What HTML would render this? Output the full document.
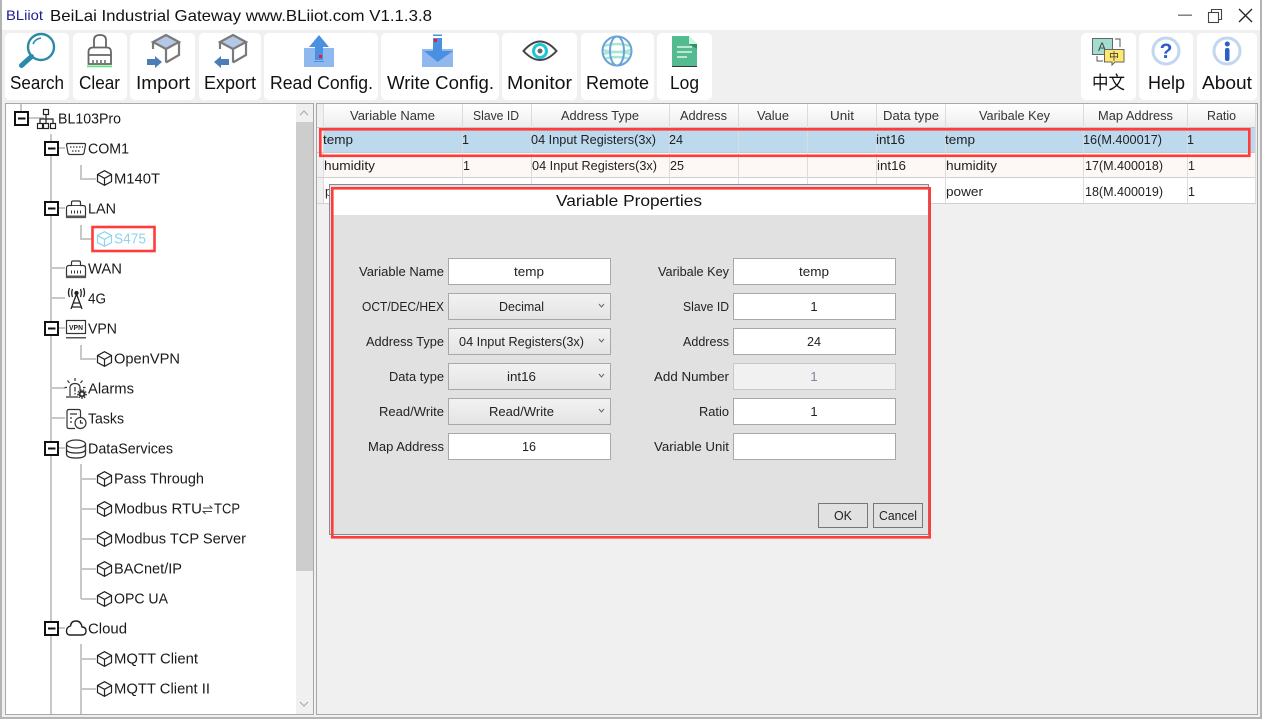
<!DOCTYPE html>
<html><head><meta charset="utf-8"><title>BeiLai Industrial Gateway</title>
<style>
html,body{margin:0;padding:0;background:#f0f0f0;overflow:hidden}
svg{display:block}
text{font-family:"Liberation Sans","Noto Sans CJK SC",sans-serif;fill:#111}
.tb{font-size:18px}
.tr{font-size:14.5px;fill:#1a1a1a}
.th{font-size:12.5px;fill:#333;text-anchor:middle}
.td{font-size:12.5px;fill:#222}
.lb{font-size:13px;fill:#222;text-anchor:end}
.vl{font-size:13px;fill:#222;text-anchor:middle}
</style></head><body>
<svg width="1264" height="719" viewBox="0 0 1264 719" xmlns="http://www.w3.org/2000/svg">
<defs>
<linearGradient id="hd" x1="0" y1="0" x2="0" y2="1"><stop offset="0" stop-color="#ffffff"/><stop offset="1" stop-color="#eeeeee"/></linearGradient>
<linearGradient id="sel" x1="0" y1="0" x2="0" y2="1"><stop offset="0" stop-color="#f2f2f2"/><stop offset="1" stop-color="#e4e4e4"/></linearGradient>
<g id="cube" fill="none" stroke="#222" stroke-width="1.2"><path d="M7.5 .7L14.5 4.5V11.5L7.5 15.3L.5 11.500V4.500Z"/><path d="M.5 4.5L7.5 8.3L14.5 4.5M7.5 8.3V15.3"/></g>
<g id="cubeb" fill="none" stroke="#8fd3f0" stroke-width="1.2"><path d="M7.5 .7L14.5 4.5V11.5L7.5 15.3L.5 11.5V4.5Z"/><path d="M.5 4.5L7.5 8.3L14.5 4.5M7.5 8.3V15.3"/></g>
<g id="exp"><rect x="1" y="1" width="13" height="13" fill="#fff" stroke="#111" stroke-width="2"/><rect x="4" y="6.500" width="7.500" height="2" fill="#111"/></g>
<g id="lan" fill="none" stroke="#333" stroke-width="1.200"><path d="M.5 17.500V8Q.5 5.500 3 5.500H5.500V2.500Q5.500 1 7 1H13Q14.500 1 14.500 2.500V5.500H17Q19.500 5.500 19.500 8V17.500Z"/><rect x="0" y="15.500" width="20" height="2.500" fill="#555" stroke="none"/><path d="M5.500 13.500V10.500M8.500 13.500V10.500M11.500 13.500V10.500M14.500 13.500V10.500" stroke-width="1"/><path d="M5.500 5.500H14.500" stroke-width=".9"/></g>
<g id="box"><path d="M10 1L23 8L10 15L-3 8Z" fill="#b3c7e6" stroke="#7a7a7a" stroke-width="2.200"/><path d="M-3 8V15M23 8V21L10 28.500M10 15V28.500" fill="none" stroke="#7a7a7a" stroke-width="2.200"/></g>
</defs>

<!-- window -->
<rect width="1264" height="719" fill="#f0f0f0"/>
<rect x="0" y="0" width="1264" height="30" fill="#fff"/>
<rect x="0" y="0" width="2" height="719" fill="#b4b4b4"/>
<rect x="1260" y="0" width="2" height="719" fill="#b4b4b4"/>
<rect x="0" y="717" width="1264" height="2" fill="#b4b4b4"/>
<rect x="1262" y="0" width="2" height="719" fill="#fff"/>
<text x="6" y="20" font-size="13.5" textLength="37" lengthAdjust="spacingAndGlyphs" style="fill:#1c1c8e">BLiiot</text>
<text x="50" y="21" font-size="16" textLength="382" lengthAdjust="spacingAndGlyphs" style="fill:#111">BeiLai Industrial Gateway www.BLiiot.com V1.1.3.8</text>
<rect x="1178" y="14.500" width="14" height="1.400" fill="#777"/>
<g fill="none" stroke="#444" stroke-width="1.100"><rect x="1208.500" y="12.500" width="10" height="10" fill="#fff"/><path d="M1211.500 12.500V9.500H1221.500V19.500H1218.500"/></g>
<path d="M1239 9L1252 22M1252 9L1239 22" stroke="#222" stroke-width="1.300" fill="none"/>

<!-- toolbar buttons -->
<g fill="#fff">
<rect x="5" y="33" width="64" height="67" rx="5"/><rect x="73" y="33" width="54" height="67" rx="5"/>
<rect x="130" y="33" width="65" height="67" rx="5"/><rect x="199" y="33" width="62" height="67" rx="5"/>
<rect x="264" y="33" width="114" height="67" rx="5"/><rect x="381" y="33" width="118" height="67" rx="5"/>
<rect x="502" y="33" width="75" height="67" rx="5"/><rect x="581" y="33" width="73" height="67" rx="5"/>
<rect x="657" y="33" width="55" height="67" rx="5"/><rect x="1081" y="33" width="55" height="67" rx="5"/>
<rect x="1139" y="33" width="54" height="67" rx="5"/><rect x="1197" y="33" width="60" height="67" rx="5"/>
</g>
<text class="tb" x="10" y="89" textLength="54" lengthAdjust="spacingAndGlyphs">Search</text>
<text class="tb" x="79" y="89" textLength="41" lengthAdjust="spacingAndGlyphs">Clear</text>
<text class="tb" x="136" y="89" textLength="54" lengthAdjust="spacingAndGlyphs">Import</text>
<text class="tb" x="204" y="89" textLength="52" lengthAdjust="spacingAndGlyphs">Export</text>
<text class="tb" x="270" y="89" textLength="103" lengthAdjust="spacingAndGlyphs">Read Config.</text>
<text class="tb" x="387" y="89" textLength="107" lengthAdjust="spacingAndGlyphs">Write Config.</text>
<text class="tb" x="507" y="89" textLength="65" lengthAdjust="spacingAndGlyphs">Monitor</text>
<text class="tb" x="586" y="89" textLength="63" lengthAdjust="spacingAndGlyphs">Remote</text>
<text class="tb" x="670" y="89" textLength="29" lengthAdjust="spacingAndGlyphs">Log</text>
<text class="tb" x="1092" y="89" textLength="33" lengthAdjust="spacingAndGlyphs">中文</text>
<text class="tb" x="1148" y="89" textLength="37" lengthAdjust="spacingAndGlyphs">Help</text>
<text class="tb" x="1202" y="89" textLength="50" lengthAdjust="spacingAndGlyphs">About</text>

<!-- search -->
<circle cx="41" cy="47" r="13" fill="none" stroke="#2a8aa8" stroke-width="2.400"/>
<path d="M33 44Q35 39 41 38" fill="none" stroke="#2a8aa8" stroke-width="1.500"/>
<path d="M31.500 56.500L21.500 65.500" stroke="#2a8aa8" stroke-width="5" stroke-linecap="round"/>
<!-- clear -->
<g fill="none" stroke="#666" stroke-width="1.800"><path d="M94 47V40Q94 35 100 35Q106 35 106 40V47"/><path d="M88.500 64V52Q88.500 47.500 93 47.500H107Q111 47.500 111 52V64Z"/><path d="M88 55H111"/><path d="M93 63V60M97 63V60M101 63V60M105 63V60" stroke-width="1.500"/></g>
<rect x="87" y="65.500" width="25" height="1.800" fill="#5fe87f"/>
<!-- import -->
<use href="#box" x="156" y="34"/>
<path d="M147 59H155V56L162 62L155 68V65H147Z" fill="#4a7eb5"/>
<!-- export -->
<use href="#box" x="223" y="34"/>
<path d="M229 59H221V56L214 62L221 68V65H229Z" fill="#4a7eb5"/>
<!-- read -->
<rect x="304" y="48" width="30" height="19" fill="#8fb9ee"/>
<path d="M319 35L329 47H323V60H315V47H309Z" fill="#4a90e2"/>
<rect x="314" y="61" width="10" height="1" fill="#4a90e2"/>
<rect x="319" y="55" width="3" height="3" fill="#e82020"/>
<!-- write -->
<rect x="422" y="49" width="31" height="18" fill="#8fb9ee"/>
<path d="M433 38H442V51H453L437.500 62L424 51H433Z" fill="#4a90e2"/>
<rect x="433" y="34.500" width="9" height="1.500" fill="#4a90e2"/>
<rect x="434" y="39" width="3" height="3" fill="#e82020"/>
<!-- monitor -->
<path d="M523.500 51Q540 32 556.500 51Q540 69 523.500 51Z" fill="#fff" stroke="#444" stroke-width="2"/>
<circle cx="540" cy="51" r="6.500" fill="none" stroke="#1cc8d8" stroke-width="3"/>
<circle cx="540" cy="51" r="2.500" fill="#666"/>
<!-- remote -->
<g fill="none"><path d="M604 46Q617 42 630 46M603 50Q617 54 631 50M603 54Q617 50 631 54M604 59Q617 55 630 59" stroke="#a8e6d8" stroke-width="2.500"/>
<circle cx="617" cy="51" r="14.500" stroke="#6ba3d6" stroke-width="2"/><ellipse cx="617" cy="51" rx="7" ry="14.500" stroke="#6ba3d6" stroke-width="2"/></g>
<!-- log -->
<path d="M672 36H689L697 44V66H672Z" fill="#53bb8f"/>
<path d="M689 36L697 44H689Z" fill="#c9f5e4"/>
<path d="M689 44H697V49Z" fill="#2f8f67"/>
<rect x="672" y="66" width="25" height="1" fill="#333"/>
<path d="M677 47H692M677 52H692M677 57H687" stroke="#fff" stroke-width="1.300"/>
<!-- language -->
<rect x="1092.500" y="38.500" width="20" height="16" fill="#a2ddd0" stroke="#666" stroke-width="1"/>
<text x="1098" y="51" font-size="12" style="fill:#444">A</text>
<path d="M1115 39H1120V47M1097 56V61H1103" fill="none" stroke="#555" stroke-width="1"/>
<path d="M1104.500 49.500H1124V62H1115L1112 65V62H1104.500Z" fill="#ffe870" stroke="#666" stroke-width="1"/>
<text x="1109" y="60" font-size="10" style="fill:#333">中</text>
<!-- help -->
<circle cx="1166" cy="51" r="13" fill="#fff" stroke="#c2d6f0" stroke-width="3"/>
<text x="1166" y="58" font-size="21" font-weight="bold" text-anchor="middle" style="fill:#2860c8">?</text>
<!-- about -->
<circle cx="1227" cy="51" r="13" fill="#fff" stroke="#c2d6f0" stroke-width="3"/>
<rect x="1225" y="48" width="4.500" height="13" rx="2" fill="#2860c8"/><circle cx="1227.300" cy="44" r="2.500" fill="#2860c8"/>

<!-- tree panel -->
<rect x="5.500" y="103.500" width="308" height="611" fill="#fff" stroke="#a8a8a8"/>
<rect x="296" y="104" width="17" height="610" fill="#f0f0f0"/>
<rect x="296" y="122" width="17" height="449" fill="#cdcdcd"/>
<path d="M300 115L304 111L308 115M300 702L304 706L308 702" fill="none" stroke="#a6a6a6" stroke-width="1"/>

<g stroke="#c8c8c8" stroke-width="2" fill="none">
<path d="M21 104V111M28 118H36M44 118H36"/>
<path d="M51 134V714"/>
<path d="M58 148H65M81 165V179H96"/>
<path d="M58 208H65M81 225V239H92"/>
<path d="M51 268H65M51 298H65"/>
<path d="M58 328H65M81 345V359H96"/>
<path d="M51 388H65M51 418H65"/>
<path d="M58 448H65"/>
<path d="M81 464V599M81 479H96M81 509H96M81 539H96M81 569H96M81 599H96"/>
<path d="M58 628H65"/>
<path d="M81 644V714M81 659H96M81 689H96"/>
</g>
<use href="#exp" x="14" y="111"/><use href="#exp" x="44" y="141"/><use href="#exp" x="44" y="201"/><use href="#exp" x="44" y="321"/><use href="#exp" x="44" y="441"/><use href="#exp" x="44" y="621"/>

<!-- network icon -->
<g fill="none" stroke="#222" stroke-width="1.200"><rect x="43.500" y="109.500" width="5" height="5"/><rect x="37.500" y="123.500" width="5" height="5"/><rect x="43.500" y="123.500" width="5" height="5"/><rect x="50.500" y="123.500" width="5" height="5"/><path d="M46 115V123M40 123V119H53V123"/></g>
<!-- com -->
<g fill="none" stroke="#333" stroke-width="1.200"><path d="M68 143.500H84.500Q85.500 143.500 85.500 145L84 153Q83.500 154.500 82 154.500H70Q68.500 154.500 68 153L66.500 145Q66.500 143.500 68 143.500Z"/><path d="M70 147H83M72 151H81" stroke-dasharray="1.500 1.500"/></g>
<use href="#cube" x="97" y="170"/>
<use href="#lan" x="66" y="200"/>
<use href="#cubeb" x="97" y="231"/>
<use href="#lan" x="66" y="260"/>
<!-- antenna -->
<g fill="none" stroke="#222" stroke-width="1.300"><path d="M76.500 294L71 309M76.500 294L82 309M73.500 303H79.500M72 307H81"/><circle cx="76.500" cy="293" r="1.500" fill="#222"/><path d="M72.500 289Q71 293 72.500 297M80.500 289Q82 293 80.500 297M69.500 288Q67.500 293 69.500 297M83.500 288Q85.500 293 83.500 297"/></g>
<!-- vpn -->
<rect x="66.500" y="320.500" width="19" height="13" fill="#fff" stroke="#333" stroke-width="1.200"/>
<text x="76" y="330" font-size="7" font-weight="bold" text-anchor="middle" textLength="14" lengthAdjust="spacingAndGlyphs" style="fill:#222">VPN</text>
<rect x="66" y="337" width="20" height="1.500" fill="#555"/>
<use href="#cube" x="97" y="351"/>
<!-- alarms -->
<g fill="none" stroke="#333" stroke-width="1.200"><path d="M70 396V388Q70 383.500 75 383.500Q80 383.500 80 388V391M66 397H78"/><path d="M75 381V378M69.500 383L67.500 380.500M80.500 383L82.500 380.500M67 387.500H64.500M83 387.500H85.500M75 387V391.500M75 393V394.500"/><circle cx="82" cy="394" r="2.500" stroke-width="2.200"/><circle cx="82" cy="394" r="4.300" stroke-width="1.200" stroke-dasharray="1.500 1.500"/></g>
<!-- tasks -->
<g fill="none" stroke="#333" stroke-width="1.200"><path d="M75 428.500H69Q67 428.500 67 426.500V411.500Q67 409.500 69 409.500H78.500Q80.500 409.500 80.500 411.500V417"/><path d="M70 414H77M70 418H72M70 422H72"/><circle cx="80.500" cy="423" r="5.500" fill="#fff"/><path d="M80.500 420V423H83"/></g>
<!-- db -->
<g fill="none" stroke="#333" stroke-width="1.300"><ellipse cx="76" cy="444" rx="9.500" ry="4"/><path d="M66.500 444V454Q66.500 458 76 458Q85.500 458 85.500 454V444M66.500 449Q66.500 453 76 453Q85.500 453 85.500 449"/></g>
<!-- cloud -->
<path d="M70 635H82Q86 635 86 631Q86 627 82 627Q81 621 76 621Q71 621 70.500 626Q66.500 627 66.500 631Q66.500 635 70 635Z" fill="none" stroke="#222" stroke-width="1.400"/>
<use href="#cube" x="97" y="471"/><use href="#cube" x="97" y="501"/><use href="#cube" x="97" y="531"/><use href="#cube" x="97" y="561"/><use href="#cube" x="97" y="591"/><use href="#cube" x="97" y="651"/><use href="#cube" x="97" y="681"/>

<text class="tr" x="58" y="123.500" textLength="63" lengthAdjust="spacingAndGlyphs">BL103Pro</text>
<text class="tr" x="88" y="153.500" textLength="41" lengthAdjust="spacingAndGlyphs">COM1</text>
<text class="tr" x="114" y="183.500" textLength="46" lengthAdjust="spacingAndGlyphs">M140T</text>
<text class="tr" x="88" y="213.500" textLength="28" lengthAdjust="spacingAndGlyphs">LAN</text>
<text class="tr" x="114" y="243.500" textLength="32" lengthAdjust="spacingAndGlyphs" style="fill:#8fd3f0">S475</text>
<text class="tr" x="88" y="273.500" textLength="34" lengthAdjust="spacingAndGlyphs">WAN</text>
<text class="tr" x="88" y="303.500" textLength="18" lengthAdjust="spacingAndGlyphs">4G</text>
<text class="tr" x="88" y="333.500" textLength="29" lengthAdjust="spacingAndGlyphs">VPN</text>
<text class="tr" x="114" y="363.500" textLength="66" lengthAdjust="spacingAndGlyphs">OpenVPN</text>
<text class="tr" x="88" y="393.500" textLength="46" lengthAdjust="spacingAndGlyphs">Alarms</text>
<text class="tr" x="88" y="423.500" textLength="36" lengthAdjust="spacingAndGlyphs">Tasks</text>
<text class="tr" x="88" y="453.500" textLength="85" lengthAdjust="spacingAndGlyphs">DataServices</text>
<text class="tr" x="114" y="483.500" textLength="90" lengthAdjust="spacingAndGlyphs">Pass Through</text>
<text class="tr" x="114" y="513.500" textLength="88" lengthAdjust="spacingAndGlyphs">Modbus RTU</text>
<path d="M203 508H212L209.500 505.500M212 511.500H203L205.500 514" fill="none" stroke="#444" stroke-width="1"/>
<text class="tr" x="214" y="513.500" textLength="26" lengthAdjust="spacingAndGlyphs">TCP</text>
<text class="tr" x="114" y="543.500" textLength="132" lengthAdjust="spacingAndGlyphs">Modbus TCP Server</text>
<text class="tr" x="114" y="573.500" textLength="68" lengthAdjust="spacingAndGlyphs">BACnet/IP</text>
<text class="tr" x="114" y="603.500" textLength="54" lengthAdjust="spacingAndGlyphs">OPC UA</text>
<text class="tr" x="88" y="633.500" textLength="39" lengthAdjust="spacingAndGlyphs">Cloud</text>
<text class="tr" x="114" y="663.500" textLength="84" lengthAdjust="spacingAndGlyphs">MQTT Client</text>
<text class="tr" x="114" y="693.500" textLength="96" lengthAdjust="spacingAndGlyphs">MQTT Client II</text>
<rect x="6" y="714" width="290" height="1" fill="#a8a8a8"/>
<rect x="92.500" y="227" width="62" height="24" fill="none" stroke="#ff3b3b" stroke-width="2.600"/>

<!-- table panel -->
<rect x="316.500" y="103.500" width="941" height="611" fill="#f0f0f0" stroke="#a8a8a8"/>
<rect x="323" y="104" width="933" height="23" fill="url(#hd)"/>
<rect x="317" y="104" width="6" height="99" fill="#f0f0f0"/>
<rect x="317" y="127" width="939" height="1" fill="#c8c8c8"/>
<rect x="323" y="128" width="933" height="24" fill="#bcd9ee"/>
<rect x="323" y="153" width="933" height="25" fill="#fdf8f6"/>
<rect x="323" y="178" width="933" height="25" fill="#fff"/>
<rect x="317" y="152" width="939" height="1" fill="#c8c8c8"/>
<rect x="317" y="177" width="939" height="1" fill="#d0d0d0"/>
<rect x="317" y="203" width="939" height="1" fill="#d0d0d0"/>
<g fill="#dcdcdc">
<rect x="323" y="104" width="1" height="99"/><rect x="462" y="104" width="1" height="99"/><rect x="531" y="104" width="1" height="99"/><rect x="669" y="104" width="1" height="99"/><rect x="738" y="104" width="1" height="99"/><rect x="807" y="104" width="1" height="99"/><rect x="876" y="104" width="1" height="99"/><rect x="945" y="104" width="1" height="99"/><rect x="1083" y="104" width="1" height="99"/><rect x="1187" y="104" width="1" height="99"/><rect x="1255" y="104" width="1" height="99"/>
</g>
<text class="th" x="392.500" y="120" textLength="85" lengthAdjust="spacingAndGlyphs">Variable Name</text>
<text class="th" x="496" y="120" textLength="46" lengthAdjust="spacingAndGlyphs">Slave ID</text>
<text class="th" x="600" y="120" textLength="78" lengthAdjust="spacingAndGlyphs">Address Type</text>
<text class="th" x="703.500" y="120" textLength="47" lengthAdjust="spacingAndGlyphs">Address</text>
<text class="th" x="773" y="120" textLength="32" lengthAdjust="spacingAndGlyphs">Value</text>
<text class="th" x="842" y="120" textLength="24" lengthAdjust="spacingAndGlyphs">Unit</text>
<text class="th" x="911" y="120" textLength="56" lengthAdjust="spacingAndGlyphs">Data type</text>
<text class="th" x="1014.500" y="120" textLength="71" lengthAdjust="spacingAndGlyphs">Varibale Key</text>
<text class="th" x="1135.500" y="120" textLength="75" lengthAdjust="spacingAndGlyphs">Map Address</text>
<text class="th" x="1221.500" y="120" textLength="29" lengthAdjust="spacingAndGlyphs">Ratio</text>

<text class="td" x="323" y="144" textLength="30" lengthAdjust="spacingAndGlyphs">temp</text>
<text class="td" x="462" y="144">1</text>
<text class="td" x="531" y="144" textLength="125" lengthAdjust="spacingAndGlyphs">04 Input Registers(3x)</text>
<text class="td" x="669" y="144" textLength="14" lengthAdjust="spacingAndGlyphs">24</text>
<text class="td" x="876" y="144" textLength="29" lengthAdjust="spacingAndGlyphs">int16</text>
<text class="td" x="945" y="144" textLength="30" lengthAdjust="spacingAndGlyphs">temp</text>
<text class="td" x="1083" y="144" textLength="79" lengthAdjust="spacingAndGlyphs">16(M.400017)</text>
<text class="td" x="1187" y="144">1</text>

<text class="td" x="324" y="170" textLength="51" lengthAdjust="spacingAndGlyphs">humidity</text>
<text class="td" x="463" y="170">1</text>
<text class="td" x="532" y="170" textLength="125" lengthAdjust="spacingAndGlyphs">04 Input Registers(3x)</text>
<text class="td" x="670" y="170" textLength="14" lengthAdjust="spacingAndGlyphs">25</text>
<text class="td" x="877" y="170" textLength="29" lengthAdjust="spacingAndGlyphs">int16</text>
<text class="td" x="946" y="170" textLength="51" lengthAdjust="spacingAndGlyphs">humidity</text>
<text class="td" x="1085" y="170" textLength="78" lengthAdjust="spacingAndGlyphs">17(M.400018)</text>
<text class="td" x="1188" y="170">1</text>

<text class="td" x="325" y="196">p</text>
<text class="td" x="946" y="196" textLength="37" lengthAdjust="spacingAndGlyphs">power</text>
<text class="td" x="1085" y="196" textLength="78" lengthAdjust="spacingAndGlyphs">18(M.400019)</text>
<text class="td" x="1188" y="196">1</text>

<!-- row highlight -->
<rect x="320.300" y="129.300" width="929" height="26.500" fill="none" stroke="#ff3b3b" stroke-width="2.600"/>

<!-- dialog -->
<rect x="329.500" y="184.500" width="599" height="350" fill="#e1e1e1" stroke="#8a8a8a"/>
<rect x="332" y="188" width="596" height="27" fill="#fff"/>
<text x="629" y="206" font-size="16" text-anchor="middle" textLength="146" lengthAdjust="spacingAndGlyphs" style="fill:#111">Variable Properties</text>

<text class="lb" x="444" y="276" textLength="85" lengthAdjust="spacingAndGlyphs">Variable Name</text>
<text class="lb" x="444" y="311" textLength="82" lengthAdjust="spacingAndGlyphs">OCT/DEC/HEX</text>
<text class="lb" x="444" y="346" textLength="78" lengthAdjust="spacingAndGlyphs">Address Type</text>
<text class="lb" x="444" y="381" textLength="55" lengthAdjust="spacingAndGlyphs">Data type</text>
<text class="lb" x="444" y="416" textLength="65" lengthAdjust="spacingAndGlyphs">Read/Write</text>
<text class="lb" x="444" y="451" textLength="76" lengthAdjust="spacingAndGlyphs">Map Address</text>
<text class="lb" x="729" y="276" textLength="71" lengthAdjust="spacingAndGlyphs">Varibale Key</text>
<text class="lb" x="729" y="311" textLength="46" lengthAdjust="spacingAndGlyphs">Slave ID</text>
<text class="lb" x="729" y="346" textLength="46" lengthAdjust="spacingAndGlyphs">Address</text>
<text class="lb" x="729" y="381" textLength="75" lengthAdjust="spacingAndGlyphs">Add Number</text>
<text class="lb" x="729" y="416" textLength="30" lengthAdjust="spacingAndGlyphs">Ratio</text>
<text class="lb" x="729" y="451" textLength="75" lengthAdjust="spacingAndGlyphs">Variable Unit</text>

<g stroke="#a8a8a8" stroke-width="1">
<rect x="448.500" y="258.500" width="162" height="26" fill="#fff"/>
<rect x="448.500" y="293.500" width="162" height="26" fill="url(#sel)"/>
<rect x="448.500" y="328.500" width="162" height="26" fill="url(#sel)"/>
<rect x="448.500" y="363.500" width="162" height="26" fill="url(#sel)"/>
<rect x="448.500" y="398.500" width="162" height="26" fill="url(#sel)"/>
<rect x="448.500" y="433.500" width="162" height="26" fill="#fff"/>
<rect x="733.500" y="258.500" width="162" height="26" fill="#fff"/>
<rect x="733.500" y="293.500" width="162" height="26" fill="#fff"/>
<rect x="733.500" y="328.500" width="162" height="26" fill="#fff"/>
<rect x="733.500" y="363.500" width="162" height="26" fill="#f1f1f1" stroke="#c8c8c8"/>
<rect x="733.500" y="398.500" width="162" height="26" fill="#fff"/>
<rect x="733.500" y="433.500" width="162" height="26" fill="#fff"/>
</g>
<g fill="none" stroke="#666" stroke-width="1"><path d="M599 304L601.500 307L604 304M599 339L601.500 342L604 339M599 374L601.500 377L604 374M599 409L601.500 412L604 409"/></g>
<text class="vl" x="529" y="276" textLength="30" lengthAdjust="spacingAndGlyphs">temp</text>
<text class="vl" x="521.500" y="311" textLength="45" lengthAdjust="spacingAndGlyphs">Decimal</text>
<text class="vl" x="521.500" y="346" textLength="125" lengthAdjust="spacingAndGlyphs">04 Input Registers(3x)</text>
<text class="vl" x="521.500" y="381" textLength="29" lengthAdjust="spacingAndGlyphs">int16</text>
<text class="vl" x="521.500" y="416" textLength="65" lengthAdjust="spacingAndGlyphs">Read/Write</text>
<text class="vl" x="529" y="451" textLength="14" lengthAdjust="spacingAndGlyphs">16</text>
<text class="vl" x="814" y="276" textLength="30" lengthAdjust="spacingAndGlyphs">temp</text>
<text class="vl" x="814" y="311">1</text>
<text class="vl" x="814" y="346" textLength="14" lengthAdjust="spacingAndGlyphs">24</text>
<text class="vl" x="814" y="381" style="fill:#8a7d96">1</text>
<text class="vl" x="814" y="416">1</text>

<rect x="818.500" y="503.500" width="49" height="24" fill="#e1e1e1" stroke="#777"/>
<rect x="873.500" y="503.500" width="49" height="24" fill="#e1e1e1" stroke="#777"/>
<text class="vl" x="843" y="520" textLength="18" lengthAdjust="spacingAndGlyphs">OK</text>
<text class="vl" x="898" y="520" textLength="38" lengthAdjust="spacingAndGlyphs">Cancel</text>

<rect x="332.300" y="188.300" width="597.400" height="349" fill="none" stroke="#ff3b3b" stroke-width="2.600"/>
</svg>
</body></html>
